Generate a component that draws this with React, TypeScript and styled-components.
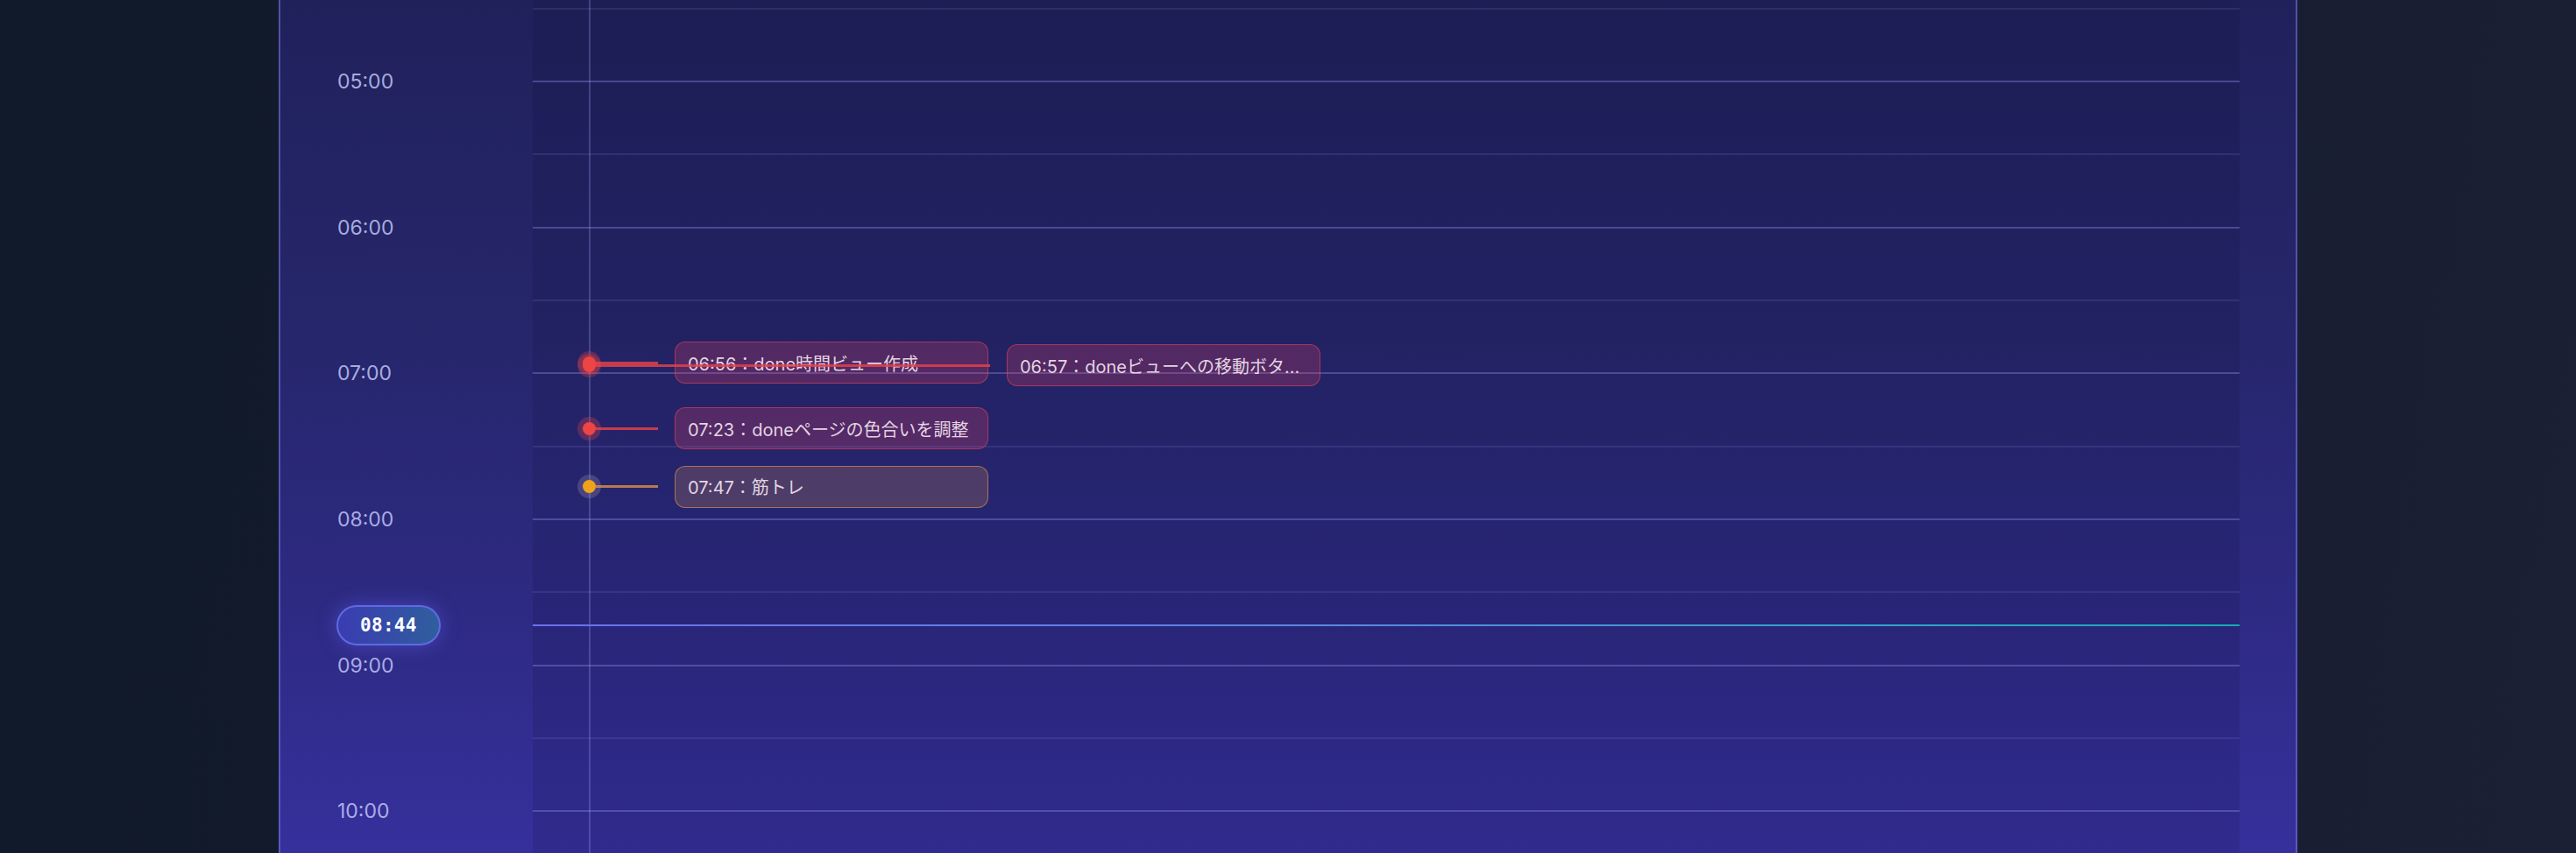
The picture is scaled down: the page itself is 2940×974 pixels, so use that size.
import React from 'react';
import styled, { createGlobalStyle, css } from 'styled-components';

const HOUR_PX = 500 / 3;
const START_HOUR = 4;
const HOURS = [4, 5, 6, 7, 8, 9, 10, 11];
const LANE_STEP = 379;

type Tone = 'red' | 'amber';

interface DoneEvent {
  time: string;
  title: string;
  tone: Tone;
  lane: number;
}

const EVENTS: DoneEvent[] = [
  { time: '06:56', title: 'done時間ビュー作成', tone: 'red', lane: 0 },
  { time: '06:57', title: 'doneビューへの移動ボタンを追加', tone: 'red', lane: 1 },
  { time: '07:23', title: 'doneページの色合いを調整', tone: 'red', lane: 0 },
  { time: '07:47', title: '筋トレ', tone: 'amber', lane: 0 },
];

const NOW = '08:44';

const toOffset = (t: string) => {
  const [h, m] = t.split(':').map(Number);
  return ((h - START_HOUR) * 60 + m) * (HOUR_PX / 60);
};

const pad = (n: number) => String(n).padStart(2, '0');

const GlobalStyle = createGlobalStyle`
  html, body {
    margin: 0;
    padding: 0;
    height: 100%;
    overflow: hidden;
  }
  body {
    background: linear-gradient(100deg, #111a2b 0%, #141b2e 55%, #1b2035 100%);
    font-family: Inter, "Noto Sans CJK JP", sans-serif;
  }
`;

const Page = styled.div`
  box-sizing: border-box;
  height: 974px;
  display: flex;
  padding: 0 318px;
`;

const Panel = styled.section`
  flex: 1;
  display: flex;
  align-items: flex-start;
  overflow: hidden;
  border-left: 2px solid rgba(118, 122, 228, 0.55);
  border-right: 2px solid rgba(118, 122, 228, 0.55);
  background: linear-gradient(180deg, #20215b 0%, #26266c 40%, #2d2a82 70%, #36309c 100%);
`;

const Timeline = styled.div`
  flex: 1;
  display: flex;
  margin-top: ${-(HOUR_PX - 92)}px;
`;

const TimeColumn = styled.div`
  position: relative;
  width: 288px;
  flex: none;
`;

const HourSlot = styled.div`
  height: ${HOUR_PX}px;
  padding-left: 65px;
`;

const HourLabel = styled.span`
  display: block;
  font-size: 23px;
  line-height: 28px;
  color: rgba(198, 202, 250, 0.84);
  transform: translateY(-13px);
`;

const NowBadge = styled.div`
  position: absolute;
  left: 64px;
  transform: translateY(-50%);
  box-sizing: border-box;
  height: 46px;
  padding: 0 25px;
  display: flex;
  align-items: center;
  border-radius: 23px;
  border: 2px solid #6169e2;
  background: linear-gradient(90deg, #3a3cb0 0%, #3450a6 60%, #2f5f9c 100%);
  box-shadow: 0 0 22px rgba(99, 102, 241, 0.45);
  color: #ffffff;
  font-family: "DejaVu Sans Mono", "Liberation Mono", monospace;
  font-weight: 700;
  font-size: 21px;
  letter-spacing: 0.3px;
`;

const Grid = styled.div`
  position: relative;
  width: 1948px;
  flex: none;
  background: rgba(10, 10, 45, 0.12);
`;

const HalfSlot = styled.div<{ $major: boolean }>`
  box-sizing: border-box;
  height: ${HOUR_PX / 2}px;
  border-top: 2px solid
    ${(p) => (p.$major ? 'rgba(150, 156, 245, 0.34)' : 'rgba(150, 156, 245, 0.14)')};
`;

const Axis = styled.div`
  position: absolute;
  top: 0;
  bottom: 0;
  left: 64px;
  width: 2px;
  background: rgba(170, 172, 255, 0.26);
`;

const NowLine = styled.div`
  position: absolute;
  left: 0;
  right: 0;
  height: 2px;
  transform: translateY(-1px);
  background: linear-gradient(90deg, #6b70ec 0%, #5a86e2 45%, #2fa4c8 80%, #17aab6 100%);
`;

const EventRow = styled.div`
  position: absolute;
  left: 51px;
  display: flex;
  align-items: center;
  transform: translateY(-50%);
`;

const toneColors = {
  red: {
    dot: '#ef4444',
    halo: 'rgba(239, 68, 68, 0.28)',
    line: 'rgba(232, 66, 74, 0.82)',
    bg: 'rgba(239, 68, 96, 0.24)',
    border: 'rgba(239, 68, 88, 0.55)',
  },
  amber: {
    dot: '#f0a21c',
    halo: 'rgba(200, 180, 200, 0.22)',
    line: 'rgba(232, 150, 70, 0.75)',
    bg: 'rgba(245, 158, 80, 0.2)',
    border: 'rgba(236, 150, 70, 0.6)',
  },
};

const Dot = styled.span<{ $tone: Tone }>`
  flex: none;
  width: 15px;
  height: 15px;
  margin-left: 6px;
  border-radius: 50%;
  ${(p) => css`
    background: ${toneColors[p.$tone].dot};
    box-shadow: 0 0 0 6px ${toneColors[p.$tone].halo};
  `}
`;

const Connector = styled.span<{ $tone: Tone }>`
  flex: none;
  height: 3px;
  margin-right: 19px;
  background: ${(p) => toneColors[p.$tone].line};
`;

const Card = styled.div<{ $tone: Tone }>`
  box-sizing: border-box;
  width: 358px;
  height: 48px;
  padding: 0 14px;
  display: flex;
  align-items: center;
  border-radius: 12px;
  border: 1.5px solid ${(p) => toneColors[p.$tone].border};
  background: ${(p) => toneColors[p.$tone].bg};
`;

const CardText = styled.span`
  min-width: 0;
  overflow: hidden;
  white-space: nowrap;
  text-overflow: ellipsis;
  font-size: 20px;
  color: rgba(252, 236, 246, 0.88);
`;

export default function App() {
  return (
    <>
      <GlobalStyle />
      <Page>
        <Panel>
          <Timeline>
            <TimeColumn>
              {HOURS.map((h) => (
                <HourSlot key={h}>
                  <HourLabel>{`${pad(h)}:00`}</HourLabel>
                </HourSlot>
              ))}
              <NowBadge style={{ top: toOffset(NOW) }}>{NOW}</NowBadge>
            </TimeColumn>
            <Grid>
              {HOURS.map((h) => (
                <React.Fragment key={h}>
                  <HalfSlot $major />
                  <HalfSlot $major={false} />
                </React.Fragment>
              ))}
              <Axis />
              <NowLine style={{ top: toOffset(NOW) }} />
              {EVENTS.map((e) => (
                <EventRow key={e.time} style={{ top: toOffset(e.time) }}>
                  <Dot $tone={e.tone} />
                  <Connector $tone={e.tone} style={{ width: 71 + e.lane * LANE_STEP }} />
                  <Card $tone={e.tone}>
                    <CardText>{`${e.time}：${e.title}`}</CardText>
                  </Card>
                </EventRow>
              ))}
            </Grid>
          </Timeline>
        </Panel>
      </Page>
    </>
  );
}
